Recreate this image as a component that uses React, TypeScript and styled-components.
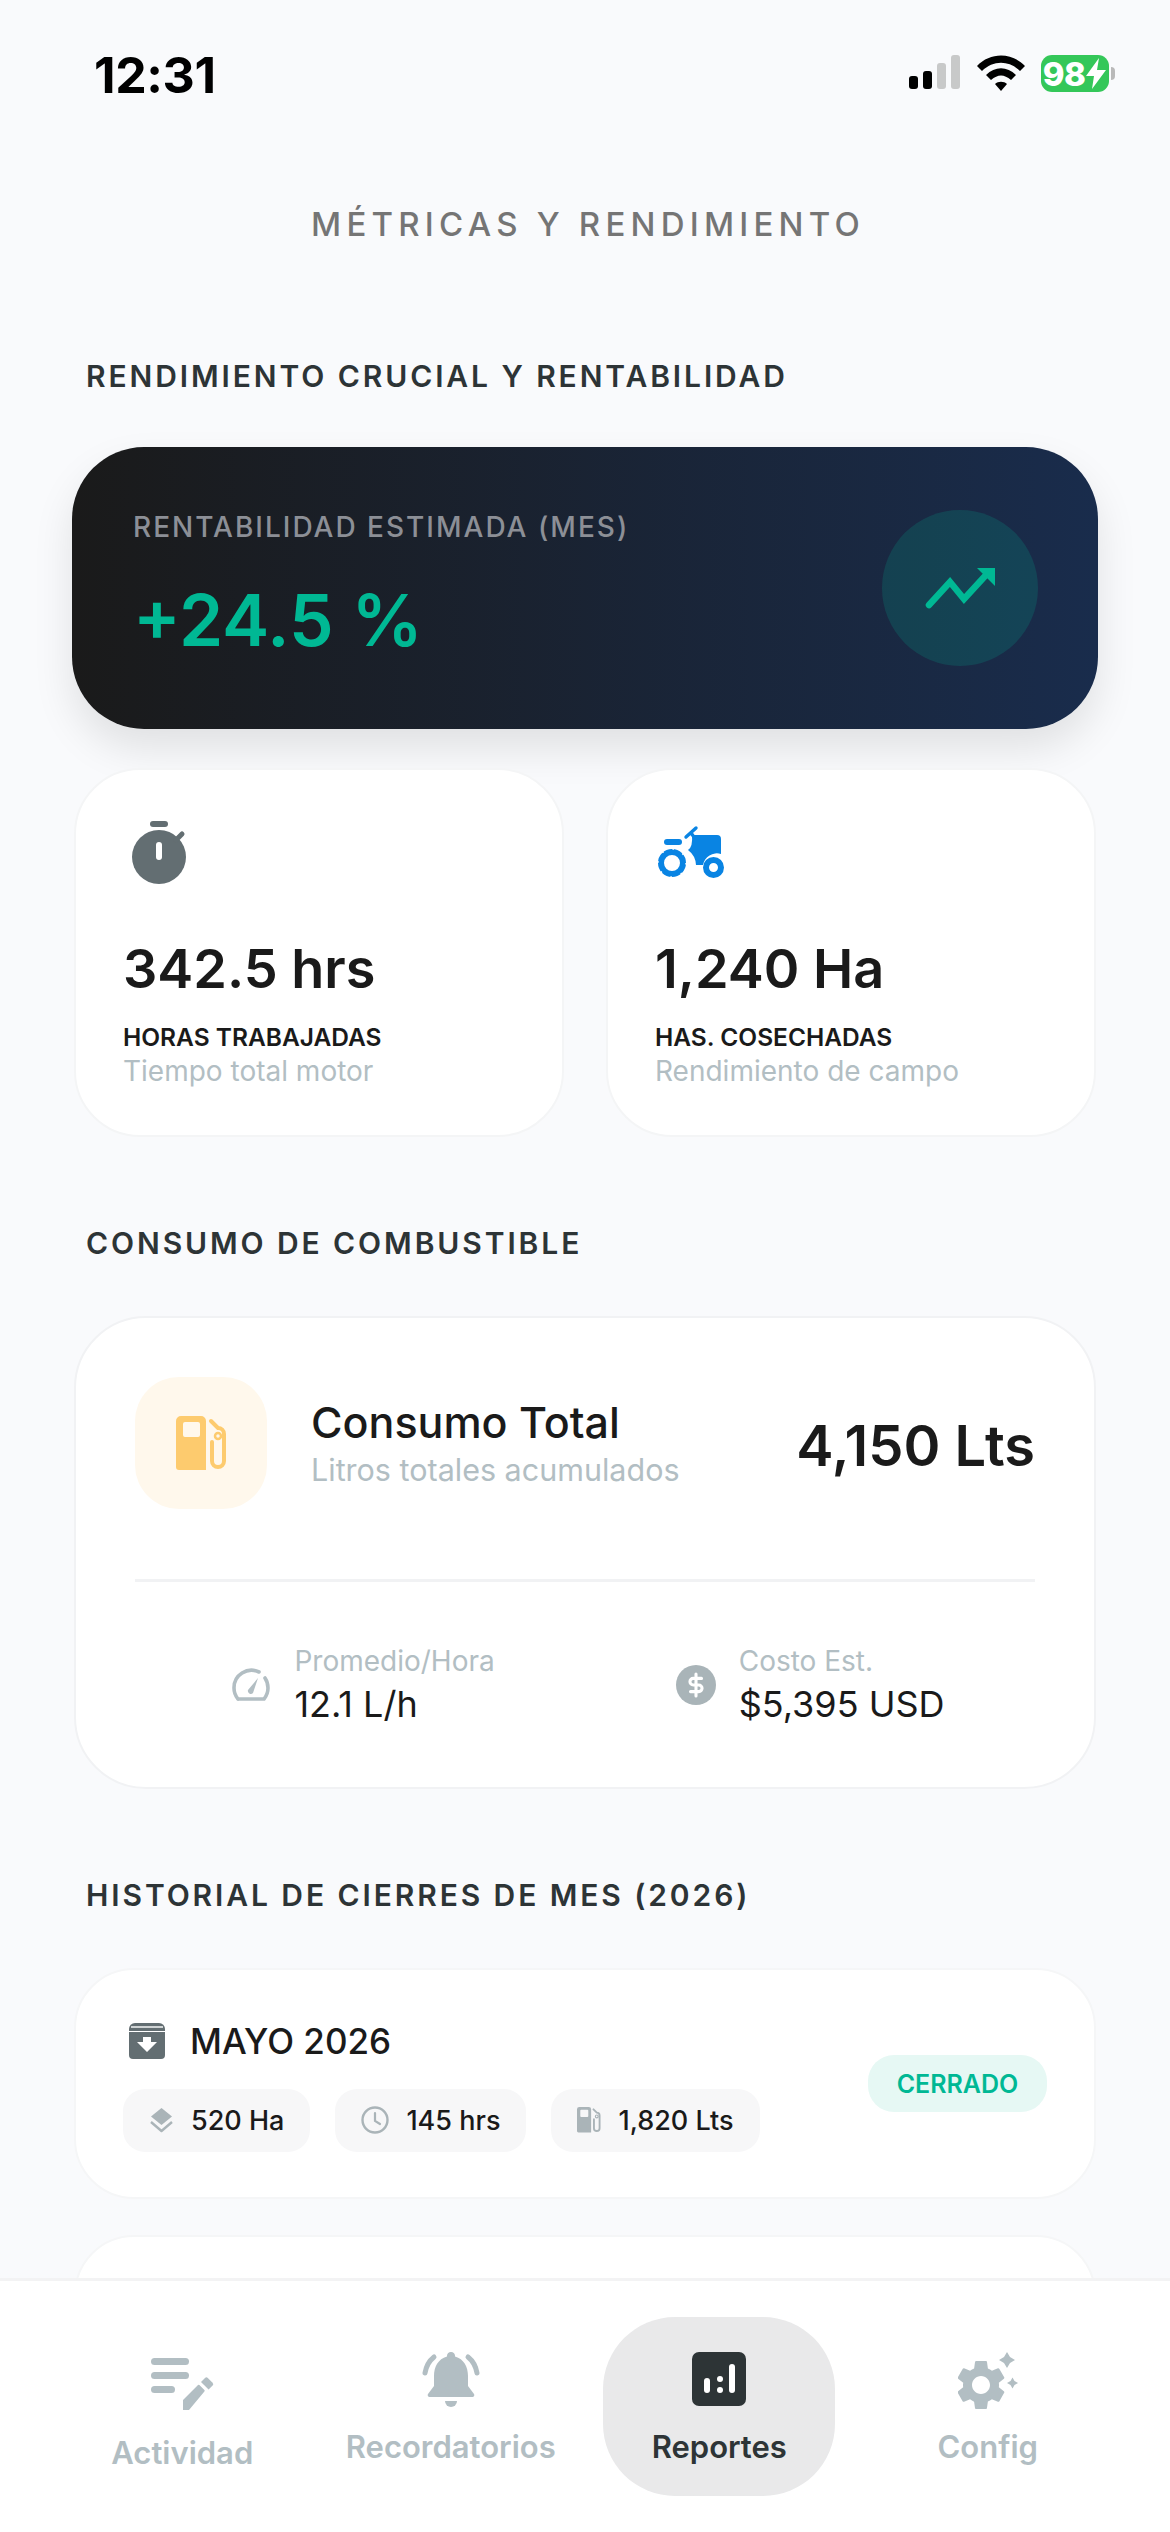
import React from "react";
import styled, { createGlobalStyle } from "styled-components";

const GlobalStyle = createGlobalStyle`
    html, body {
        margin: 0;
        padding: 0;
        background: #f9fafc;
    }
    * {
        box-sizing: border-box;
    }
`;

const GRAY = "#b2bec3";
const FUEL = "#fdcb6e";

const FuelIcon = ({ size, color }: { size: number; color: string }) => (
    <svg width={size} height={(size * 54) / 51} viewBox="0 0 51 54" fill="none">
        <path
            fillRule="evenodd"
            d="M5 0H25a5 5 0 0 1 5 5V54H3a3 3 0 0 1-3-3V5a5 5 0 0 1 5-5ZM9 6a2 2 0 0 0-2 2V19a2 2 0 0 0 2 2H22a2 2 0 0 0 2-2V8a2 2 0 0 0-2-2Z"
            fill={color}
        />
        <path
            d="M35 5l7 7a6 6 0 0 1 6 6V45a6 6 0 0 1-12 0V26"
            stroke={color}
            strokeWidth="4"
            strokeLinecap="round"
        />
        <circle cx="42" cy="20" r="3" stroke={color} strokeWidth="2.5" />
    </svg>
);

const Stopwatch = () => (
    <svg width="72" height="72" viewBox="0 0 72 72" fill="none">
        <rect x="27" y="3" width="18" height="6" rx="3" fill="#636e72" />
        <circle cx="36" cy="39" r="27" fill="#636e72" />
        <path d="M53 22l6-6" stroke="#636e72" strokeWidth="5" strokeLinecap="round" />
        <rect x="33" y="24" width="6" height="18" rx="3" fill="#fff" />
    </svg>
);

const Tractor = () => (
    <svg width="72" height="72" viewBox="0 0 72 72" fill="none">
        <g transform="translate(3 9)" fill="#0984e3">
            <path d="M34 8H59a4 4 0 0 1 4 4V27a14 14 0 0 0-18 11H38a20 20 0 0 0-8-15Q35 20 34 8Z" />
            <rect x="6" y="12" width="18" height="6" rx="3" />
            <path d="M28 10L38 1M33 6l3 4" stroke="#0984e3" strokeWidth="3.4" strokeLinecap="round" />
            <circle cx="14" cy="36" r="11" fill="none" stroke="#0984e3" strokeWidth="6" />
            <circle cx="14" cy="36" r="14" fill="none" stroke="#fff" strokeWidth="1.4" strokeDasharray="1.6 9.4" />
            <circle cx="55.5" cy="40.5" r="7.5" fill="none" stroke="#0984e3" strokeWidth="6" />
        </g>
    </svg>
);

const TrendUp = () => (
    <svg width="72" height="42" viewBox="0 0 72 42" fill="none">
        <path d="M5 38L26 15 40 32 62 8" stroke="#00b894" strokeWidth="6.5" strokeLinecap="round" strokeLinejoin="miter" />
        <path d="M53 1H71V19Z" fill="#00b894" />
    </svg>
);

const Gauge = () => (
    <svg width="40" height="34" viewBox="0 0 40 34" fill="none">
        <path d="M7 31H33a17.5 17.5 0 0 0 4-11c0-4-1-7-3-10M28 4a17.5 17.5 0 0 0-25 16c0 4 1.500 8 4 11" stroke={GRAY} strokeWidth="3.6" strokeLinecap="round" />
        <path d="M17 22L27 10l-5 15a3 3 0 0 1-5-3Z" fill={GRAY} />
    </svg>
);

const Dollar = () => (
    <svg width="40" height="40" viewBox="0 0 40 40" fill="none">
        <circle cx="20" cy="20" r="20" fill="#a9b4b8" />
        <g transform="translate(6.800 6.800) scale(1.100)" stroke="#fff" strokeWidth="2.800" strokeLinecap="round" strokeLinejoin="round">
            <path d="M12 2v20M17 6H9.500a3 3 0 0 0 0 6h5a3 3 0 0 1 0 6H7" />
        </g>
    </svg>
);

const ArchiveBox = () => (
    <svg width="36" height="36" viewBox="0 0 36 36" fill="none">
        <path d="M6 0H30a6 6 0 0 1 6 6V8H0V6a6 6 0 0 1 6-6Z" fill="#636e72" />
        <rect x="2" y="3" width="32" height="2" fill="#fff" opacity="0.7" />
        <path d="M0 9H36V32a4 4 0 0 1-4 4H4a4 4 0 0 1-4-4Z" fill="#636e72" />
        <path d="M18 29L8 19H14V14H22V19H28Z" fill="#fff" />
    </svg>
);

const Layers = () => (
    <svg width="25" height="25" viewBox="0 0 25 25" fill="none">
        <path d="M12.500 0L23 8.500 12.500 17 2 8.500Z" fill="#aab4b8" />
        <path d="M2 14l10.500 9L23 14" stroke="#aab4b8" strokeWidth="2.400" strokeLinejoin="round" />
    </svg>
);

const Clock = () => (
    <svg width="28" height="28" viewBox="0 0 28 28" fill="none">
        <circle cx="14" cy="14" r="12.500" stroke="#aab4b8" strokeWidth="2.400" />
        <path d="M14 7V15L19 18" stroke="#aab4b8" strokeWidth="2.200" strokeLinecap="round" />
    </svg>
);

const NoteEdit = () => (
    <svg width="63" height="52" viewBox="0 0 63 52" fill="none">
        <g fill={GRAY}>
            <rect x="0" y="0" width="38" height="7" rx="3.500" />
            <rect x="0" y="14" width="38" height="7" rx="3.500" />
            <rect x="0" y="28" width="24" height="7" rx="3.500" />
            <path d="M32 42L47 27a1 1 0 0 1 1.400 0l5 5a1 1 0 0 1 0 1.400L38 52H32Z" />
            <path d="M50 24l4-4a2 2 0 0 1 2.800 0l4.800 4.800a2 2 0 0 1 0 2.800l-4 4Z" />
        </g>
    </svg>
);

const Bell = () => (
    <svg width="58" height="58" viewBox="0 0 58 58" fill="none">
        <path d="M29 0a4 4 0 0 1 4 4.500C42 7 46 15 46 24V34L52 42a2 2 0 0 1-1.500 3H7.500A2 2 0 0 1 6 42L12 34V24C12 15 16 7 25 4.500A4 4 0 0 1 29 0Z" fill={GRAY} />
        <path d="M23 49H35a6 6 0 0 1-12 0Z" fill={GRAY} />
        <path d="M3 21C4 15 7 9 12 5M55 21C54 15 51 9 46 5" stroke={GRAY} strokeWidth="5" strokeLinecap="round" />
    </svg>
);

const ReportsIcon = () => (
    <svg width="54" height="54" viewBox="0 0 54 54" fill="none">
        <rect width="54" height="54" rx="7" fill="#2d3436" />
        <g fill="#fff">
            <rect x="12" y="26" width="6" height="15" rx="3" />
            <rect x="25" y="24" width="6" height="6" rx="3" />
            <rect x="25" y="35" width="6" height="6" rx="3" />
            <rect x="37" y="12" width="6" height="29" rx="3" />
        </g>
    </svg>
);

const GearSpark = () => (
    <svg width="60" height="58" viewBox="0 0 60 58" fill="none">
        <g transform="translate(-7 3) scale(2.500)" fill={GRAY}>
            <path d="M19.140 12.940c.04-.3.06-.61.06-.94 0-.32-.02-.64-.07-.94l2.030-1.580c.18-.14.230-.41.120-.61l-1.920-3.320c-.12-.22-.37-.29-.59-.22l-2.390.96c-.5-.38-1.030-.7-1.620-.94l-.36-2.540c-.04-.24-.24-.41-.48-.41h-3.840c-.24 0-.43.17-.47.41l-.36 2.540c-.59.24-1.130.57-1.620.94l-2.390-.96c-.22-.08-.47 0-.59.22L2.740 8.870c-.12.21-.08.47.12.61l2.030 1.580c-.05.3-.09.63-.09.94s.02.64.07.94l-2.030 1.580c-.18.14-.23.41-.12.61l1.920 3.320c.12.22.37.29.59.22l2.390-.96c.5.38 1.030.7 1.620.94l.36 2.540c.05.24.24.41.48.41h3.840c.24 0 .44-.17.47-.41l.36-2.540c.59-.24 1.130-.56 1.620-.94l2.390.96c.22.08.47 0 .59-.22l1.920-3.320c.12-.22.07-.47-.12-.61l-2.010-1.580zM12 15.600c-1.980 0-3.600-1.620-3.600-3.600s1.620-3.600 3.600-3.600 3.600 1.620 3.600 3.600-1.620 3.600-3.600 3.600z" />
        </g>
        <path d="M49 0l3 5 5 3-5 3-3 5-3-5-5-3 5-3Z" fill={GRAY} />
        <path d="M54.500 25.500l2 3.500 3.500 2-3.500 2-2 3.500-2-3.500-3.500-2 3.500-2Z" fill={GRAY} />
    </svg>
);

const Signal = () => (
    <svg width="52" height="36" viewBox="0 0 52 36" fill="none">
        <rect x="0" y="21" width="9" height="13" rx="3" fill="#000" />
        <rect x="14" y="16" width="9" height="18" rx="3" fill="#000" />
        <rect x="28" y="8" width="9" height="26" rx="3" fill="#c8c9c9" />
        <rect x="42" y="0" width="9" height="34" rx="3" fill="#c8c9c9" />
    </svg>
);

const Wifi = () => (
    <svg width="48" height="36" viewBox="0 0 48 36" fill="none">
        <path d="M0 11C13-3 35-3 48 11L43 16C32 5 16 5 5 16Z" fill="#000" />
        <path d="M9 20C18 11 30 11 39 20L34 25C27 19 21 19 14 25Z" fill="#000" />
        <path d="M18 29C21 26 27 26 30 29L24 36Z" fill="#000" />
    </svg>
);

const Bolt = () => (
    <svg width="22" height="31" viewBox="0 0 22 31" fill="#fff">
        <path d="M14 0L1 18H9L7 31 21 12H12Z" />
    </svg>
);

const history = [
    { id: "ha", icon: <Layers />, text: "520 Ha" },
    { id: "hrs", icon: <Clock />, text: "145 hrs" },
    { id: "lts", icon: <FuelIcon size={24} color="#aab4b8" />, text: "1,820 Lts" },
];

const App = () => {
    return (
        <Screen>
            <GlobalStyle />
            <StatusBar>
                <Time>12:31</Time>
                <StatusIcons>
                    <Signal />
                    <Wifi />
                    <Battery>
                        <BatteryBody>
                            98
                            <Bolt />
                        </BatteryBody>
                        <BatteryNub />
                    </Battery>
                </StatusIcons>
            </StatusBar>

            <Scroll>
                <Title>MÉTRICAS Y RENDIMIENTO</Title>

                <Section $first>RENDIMIENTO CRUCIAL Y RENTABILIDAD</Section>
                <Hero>
                    <HeroText>
                        <HeroLabel>RENTABILIDAD ESTIMADA (MES)</HeroLabel>
                        <HeroValue>+24.5 %</HeroValue>
                    </HeroText>
                    <HeroCircle>
                        <TrendUp />
                    </HeroCircle>
                </Hero>

                <StatGrid>
                    <StatCard>
                        <IconSlot>
                            <Stopwatch />
                        </IconSlot>
                        <StatValue>342.5 hrs</StatValue>
                        <StatLabel>HORAS TRABAJADAS</StatLabel>
                        <StatDesc>Tiempo total motor</StatDesc>
                    </StatCard>
                    <StatCard>
                        <IconSlot>
                            <Tractor />
                        </IconSlot>
                        <StatValue>1,240 Ha</StatValue>
                        <StatLabel>HAS. COSECHADAS</StatLabel>
                        <StatDesc>Rendimiento de campo</StatDesc>
                    </StatCard>
                </StatGrid>

                <Section>CONSUMO DE COMBUSTIBLE</Section>
                <FuelCard>
                    <FuelTop>
                        <FuelTile>
                            <FuelIcon size={51} color={FUEL} />
                        </FuelTile>
                        <FuelText>
                            <FuelTitle>Consumo Total</FuelTitle>
                            <FuelSub>Litros totales acumulados</FuelSub>
                        </FuelText>
                        <FuelAmount>4,150 Lts</FuelAmount>
                    </FuelTop>
                    <Divider />
                    <FuelBottom>
                        <FuelStat>
                            <Gauge />
                            <div>
                                <FuelStatLabel>Promedio/Hora</FuelStatLabel>
                                <FuelStatValue>12.1 L/h</FuelStatValue>
                            </div>
                        </FuelStat>
                        <FuelStat>
                            <Dollar />
                            <div>
                                <FuelStatLabel>Costo Est.</FuelStatLabel>
                                <FuelStatValue>$5,395 USD</FuelStatValue>
                            </div>
                        </FuelStat>
                    </FuelBottom>
                </FuelCard>

                <Section>HISTORIAL DE CIERRES DE MES (2026)</Section>
                <MonthCard>
                    <MonthInfo>
                        <MonthTitle>
                            <ArchiveBox />
                            MAYO 2026
                        </MonthTitle>
                        <Chips>
                            {history.map((chip) => (
                                <Chip key={chip.id}>
                                    {chip.icon}
                                    {chip.text}
                                </Chip>
                            ))}
                        </Chips>
                    </MonthInfo>
                    <Badge>CERRADO</Badge>
                </MonthCard>
                <MonthCard />
            </Scroll>

            <Nav>
                <NavItem $shift>
                    <NavIcon>
                        <NoteEdit />
                    </NavIcon>
                    <NavLabel>Actividad</NavLabel>
                </NavItem>
                <NavItem>
                    <NavIcon>
                        <Bell />
                    </NavIcon>
                    <NavLabel>Recordatorios</NavLabel>
                </NavItem>
                <NavItem $active>
                    <NavIcon>
                        <ReportsIcon />
                    </NavIcon>
                    <NavLabel $active>Reportes</NavLabel>
                </NavItem>
                <NavItem>
                    <NavIcon>
                        <GearSpark />
                    </NavIcon>
                    <NavLabel>Config</NavLabel>
                </NavItem>
            </Nav>
        </Screen>
    );
};

export default App;

const Screen = styled.div`
    width: 1170px;
    height: 2532px;
    display: flex;
    flex-direction: column;
    overflow: hidden;
    background: #f9fafc;
    font-family: Inter, "Noto Sans", sans-serif;
`;

const StatusBar = styled.div`
    height: 140px;
    flex: none;
    padding: 52px 55px 0 94px;
    display: flex;
    justify-content: space-between;
    align-items: flex-start;
`;

const Time = styled.div`
    font-size: 50px;
    line-height: 46px;
    font-weight: 700;
    letter-spacing: -0.4px;
    color: #000;
`;

const StatusIcons = styled.div`
    display: flex;
    align-items: flex-start;
    gap: 16px;
    padding-top: 3px;
`;

const Battery = styled.div`
    display: flex;
    align-items: center;
    gap: 2px;
`;

const BatteryBody = styled.div`
    width: 68px;
    height: 37px;
    border-radius: 11px;
    background: #34c759;
    color: #fff;
    font-size: 33px;
    font-weight: 800;
    display: flex;
    align-items: center;
    justify-content: center;
    letter-spacing: -0.5px;
`;

const BatteryNub = styled.div`
    width: 4px;
    height: 13px;
    border-radius: 0 4px 4px 0;
    background: #b9b9b9;
`;

const Scroll = styled.div`
    flex: 1;
    min-height: 0;
    overflow: hidden;
    padding: 64px 74px 0;
`;

const Title = styled.h1`
    margin: 0;
    padding-left: 6px;
    font-size: 33px;
    line-height: 40px;
    font-weight: 500;
    letter-spacing: 5.2px;
    color: #757575;
    text-align: center;
`;

const Section = styled.h2<{ $first?: boolean }>`
    margin: ${(p) => (p.$first ? "112px" : "86px")} 0 ${(p) => (p.$first ? "51px" : "53px")} 12px;
    font-size: 30px;
    line-height: 40px;
    font-weight: 600;
    letter-spacing: 2.9px;
    color: #2d3436;
`;

const Hero = styled.div`
    margin: 0 -2px 39px;
    height: 282px;
    padding: 0 60px 0 61px;
    border-radius: 72px;
    background: linear-gradient(90deg, #1a1a1a, #192c4c);
    box-shadow: 0 20px 40px rgba(0, 0, 0, 0.1);
    display: flex;
    align-items: center;
    justify-content: space-between;
`;

const HeroText = styled.div`
    margin-bottom: 6px;
`;

const HeroLabel = styled.div`
    font-size: 28px;
    line-height: 34px;
    font-weight: 500;
    letter-spacing: 2px;
    color: #8c8f96;
`;

const HeroValue = styled.div`
    margin-top: 36px;
    font-size: 71px;
    line-height: 80px;
    font-weight: 600;
    color: #00b894;
`;

const HeroCircle = styled.div`
    width: 156px;
    height: 156px;
    border-radius: 50%;
    background: rgba(0, 184, 148, 0.18);
    display: flex;
    align-items: center;
    justify-content: center;
`;

const StatGrid = styled.div`
    display: grid;
    grid-template-columns: 1fr 1fr;
    gap: 42px;
`;

const StatCard = styled.div`
    height: 369px;
    padding: 48px 40px 0 47px;
    border-radius: 66px;
    background: #fff;
    border: 2px solid #f4f5f6;
`;

const IconSlot = styled.div`
    height: 72px;
    display: flex;
`;

const StatValue = styled.div`
    margin-top: 49px;
    font-size: 54px;
    line-height: 60px;
    font-weight: 600;
    color: #1a1a1a;
`;

const StatLabel = styled.div`
    margin-top: 23px;
    font-size: 24.500px;
    line-height: 30px;
    font-weight: 600;
    color: #1a1a1a;
`;

const StatDesc = styled.div`
    margin-top: 1px;
    font-size: 28px;
    line-height: 36px;
    color: ${GRAY};
`;

const FuelCard = styled.div`
    height: 473px;
    padding: 59px 59px 0;
    border-radius: 72px;
    background: #fff;
    border: 2px solid #f1f2f4;
`;

const FuelTop = styled.div`
    display: flex;
    align-items: center;
`;

const FuelTile = styled.div`
    width: 132px;
    height: 132px;
    flex: none;
    border-radius: 44px;
    background: #fff8ec;
    display: flex;
    align-items: center;
    justify-content: center;
`;

const FuelText = styled.div`
    flex: 1;
    margin-left: 44px;
`;

const FuelTitle = styled.div`
    margin-top: -2px;
    font-size: 43px;
    line-height: 52px;
    font-weight: 500;
    color: #1a1a1a;
`;

const FuelSub = styled.div`
    margin-top: 4px;
    font-size: 30.500px;
    line-height: 36px;
    color: ${GRAY};
`;

const FuelAmount = styled.div`
    margin-top: 6px;
    font-size: 56px;
    line-height: 60px;
    font-weight: 600;
    color: #1a1a1a;
`;

const Divider = styled.div`
    margin-top: 70px;
    height: 3px;
    background: #f1f2f4;
`;

const FuelBottom = styled.div`
    margin-top: 61px;
    padding-left: 6px;
    display: flex;
    justify-content: space-around;
`;

const FuelStat = styled.div`
    display: flex;
    align-items: center;
    gap: 23px;
`;

const FuelStatLabel = styled.div`
    font-size: 28px;
    line-height: 36px;
    color: ${GRAY};
`;

const FuelStatValue = styled.div`
    margin-top: 3px;
    font-size: 36px;
    line-height: 44px;
    font-weight: 400;
    color: #1a1a1a;
`;

const MonthCard = styled.div`
    height: 231px;
    margin-bottom: 36px;
    padding: 0 47px;
    border-radius: 60px;
    background: #fff;
    border: 2px solid #f5f6f7;
    display: flex;
    align-items: center;
    justify-content: space-between;
`;

const MonthInfo = styled.div`
    padding-top: 7px;
`;

const MonthTitle = styled.div`
    display: flex;
    align-items: center;
    gap: 25px;
    padding-left: 6px;
    font-size: 35px;
    line-height: 36px;
    font-weight: 500;
    color: #1a1a1a;
`;

const Chips = styled.div`
    margin-top: 30px;
    display: flex;
    gap: 25px;
`;

const Chip = styled.div`
    height: 63px;
    padding: 0 26px;
    border-radius: 22px;
    background: #f7f7f8;
    display: flex;
    align-items: center;
    gap: 17px;
    font-size: 27px;
    font-weight: 500;
    color: #1a1a1a;
`;

const Badge = styled.div`
    width: 179px;
    height: 57px;
    border-radius: 26px;
    background: #e6f8f4;
    color: #00b894;
    font-size: 25px;
    font-weight: 600;
    display: flex;
    align-items: center;
    justify-content: center;
`;

const Nav = styled.div`
    height: 254px;
    flex: none;
    padding: 36px 48px 0;
    background: #fff;
    border-top: 3px solid #f3f3f4;
    display: grid;
    grid-template-columns: repeat(4, 1fr);
    justify-items: center;
    align-items: start;
`;

const NavItem = styled.div<{ $active?: boolean; $shift?: boolean }>`
    width: 232px;
    height: 179px;
    margin-top: ${(p) => (p.$shift ? "6px" : "0")};
    padding-top: 35px;
    border-radius: 72px;
    background: ${(p) => (p.$active ? "#e9e9ea" : "transparent")};
    display: flex;
    flex-direction: column;
    align-items: center;
`;

const NavIcon = styled.div`
    height: 58px;
    display: flex;
    align-items: flex-start;
    justify-content: center;
`;

const NavLabel = styled.div<{ $active?: boolean }>`
    margin-top: 18px;
    font-size: 31px;
    line-height: 38px;
    font-weight: 600;
    white-space: nowrap;
    color: ${(p) => (p.$active ? "#2d3436" : GRAY)};
`;
